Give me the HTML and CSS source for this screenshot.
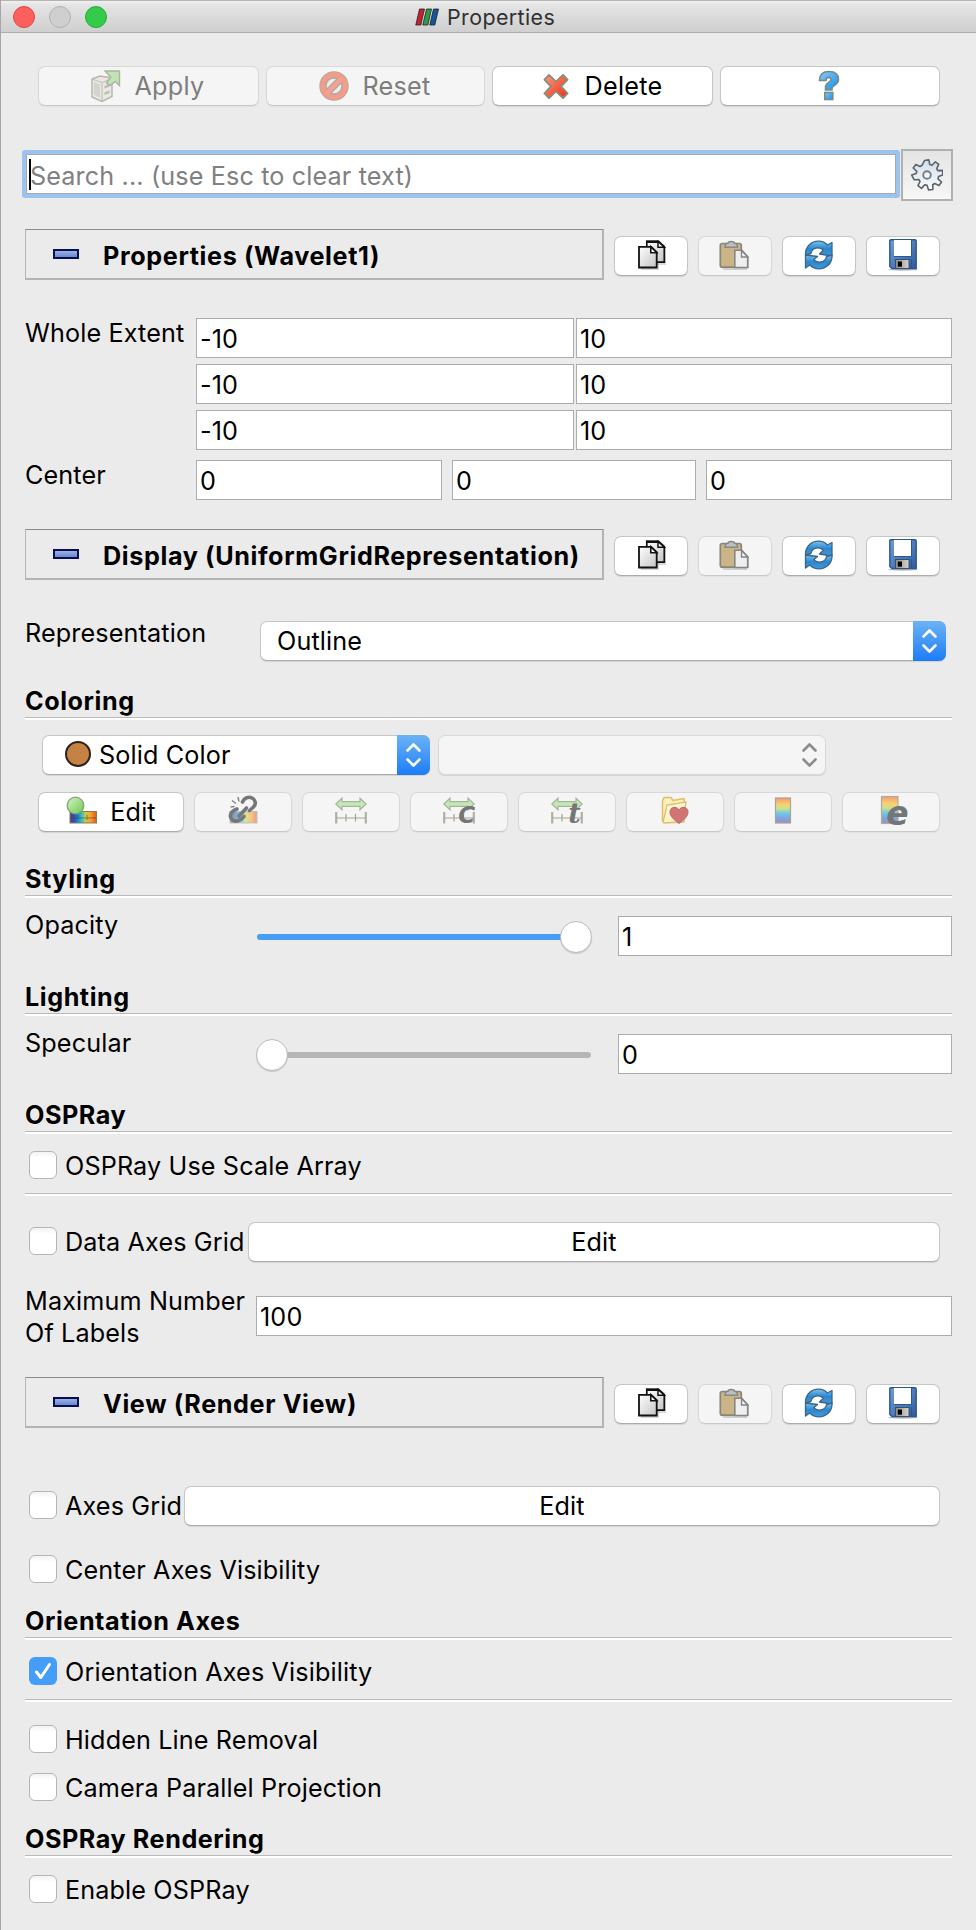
FILE: index.html
```html
<!DOCTYPE html>
<html lang="en">
<head>
<meta charset="utf-8">
<title>Properties</title>
<link rel="stylesheet" href="styles.css">
</head>
<body>
<svg class="defs" width="0" height="0" aria-hidden="true">
  <defs>
    <linearGradient id="gPage" x1="0" y1="0" x2="1" y2="1"><stop offset="0" stop-color="#fff"/><stop offset="1" stop-color="#c4c4c4"/></linearGradient>
    <linearGradient id="gBlue" x1="0" y1="0" x2="0" y2="1"><stop offset="0" stop-color="#7cc4ee"/><stop offset=".5" stop-color="#2b86cf"/><stop offset="1" stop-color="#3f9bdb"/></linearGradient>
    <linearGradient id="gDisk" x1="0" y1="0" x2="1" y2="1"><stop offset="0" stop-color="#6f9fd8"/><stop offset="1" stop-color="#2f5c9e"/></linearGradient>
    <linearGradient id="gMetal" x1="0" y1="0" x2="1" y2="0"><stop offset="0" stop-color="#8d8d85"/><stop offset="1" stop-color="#d8d6cd"/></linearGradient>
    <linearGradient id="gRed" x1="0" y1="0" x2="1" y2="1"><stop offset="0" stop-color="#ff9a86"/><stop offset="1" stop-color="#f42a0c"/></linearGradient>
    <linearGradient id="gHelp" x1="0" y1="0" x2="1" y2="1"><stop offset="0" stop-color="#86cbfa"/><stop offset="1" stop-color="#0f90f5"/></linearGradient>
    <linearGradient id="gGear" x1="0" y1="0" x2="0" y2="1"><stop offset="0" stop-color="#d3dde6"/><stop offset="1" stop-color="#fbfcfd"/></linearGradient>
    <linearGradient id="gGreen" x1="0" y1="0" x2="1" y2="1"><stop offset="0" stop-color="#d5f2c4"/><stop offset="1" stop-color="#6cc94e"/></linearGradient>
    <linearGradient id="gRainH" x1="0" y1="0" x2="1" y2="0"><stop offset="0" stop-color="#6a2a94"/><stop offset=".2" stop-color="#1c62b8"/><stop offset=".4" stop-color="#1fb0d8"/><stop offset=".58" stop-color="#c2cf4a"/><stop offset=".78" stop-color="#fba02c"/><stop offset="1" stop-color="#e2571c"/></linearGradient>
    <linearGradient id="gRainV" x1="0" y1="0" x2="0" y2="1"><stop offset="0" stop-color="#f29a70"/><stop offset=".25" stop-color="#f8cf70"/><stop offset=".42" stop-color="#cfe08a"/><stop offset=".6" stop-color="#6fcbe4"/><stop offset=".8" stop-color="#80a6dc"/><stop offset="1" stop-color="#a18bc8"/></linearGradient>
  </defs>
  <symbol id="i-copy" viewBox="0 0 32 32">
    <path d="M13 5h14.500l1.500 5v16H13z" fill="#999" opacity=".35"/><path d="M4 29h18v2H4zM20 15h2v15h-2z" fill="#999" opacity=".4"/>
    <path d="M9.800 2.300h11.800l5.700 5.400v15.500H9.800z" fill="url(#gPage)" stroke="#111" stroke-width="1.700"/><path d="M9 2.800h12.500" stroke="#111" stroke-width="2.400"/><path d="M21 2.500v5.700h6.300z" fill="#fff" stroke="#111" stroke-width="1.500"/>
    <path d="M2 7.800h12.200l5.500 5.300v15.400H2z" fill="url(#gPage)" stroke="#111" stroke-width="1.800"/><path d="M13.800 7.800v6h6z" fill="#fff" stroke="#111" stroke-width="1.600"/>
  </symbol>
  <symbol id="i-paste" viewBox="0 0 32 32">
    <path d="M3 29h25v2H5zM28 16l2 2v11h-2z" fill="#aaa" opacity=".5"/>
    <rect x="1.300" y="4.500" width="21" height="23.700" rx="2" fill="#cbb486" stroke="#8b8778" stroke-width="1.700"/>
    <path d="M6 8.200c0-3 1.500-3.900 3-3.900C9.500 2 15 2 15.500 4.300c1.500 0 3 .9 3 3.900z" fill="#bdbfbf" stroke="#888" stroke-width="1.500"/>
    <path d="M15.800 11.300h7l5.900 6.400v10.800H15.800z" fill="#eee" stroke="#858585" stroke-width="1.600"/><path d="M22.500 11.500v6.500h6.200z" fill="#f6f6f6" stroke="#858585" stroke-width="1.400"/>
  </symbol>
  <symbol id="i-refresh" viewBox="0 0 32 32">
    <path d="M2.500 16C2 7 9 2.200 15.500 2.200c4 0 7 1.500 8.800 3.800L29 3.500V17l-12.500-2 3.800-3.800C17 7.500 9 8 8 14.500z" fill="url(#gBlue)" stroke="#3d6588" stroke-width="1.300" stroke-linejoin="round"/>
    <path d="M29 16c.5 9-6.500 13.800-13 13.800-4 0-7-1.500-9.300-3.800L2.500 29V16l12 1.500-3.800 3.300C14 24.500 22.500 24 23.500 17.500z" fill="url(#gBlue)" stroke="#3d6588" stroke-width="1.300" stroke-linejoin="round"/>
  </symbol>
  <symbol id="i-save" viewBox="0 0 32 32">
    <ellipse cx="16" cy="30.500" rx="15" ry="1.200" fill="#bbb"/>
    <path d="M4 .8h24q1.200 0 1.200 1.200v27.500H5L2.800 27.500V2Q2.800.8 4 .8z" fill="url(#gDisk)" stroke="#2c5794" stroke-width="1.400"/>
    <rect x="7" y="1" width="17.500" height="16.200" fill="#fff"/><path d="M24.500 1v16.500H7" fill="none" stroke="#2c5794" stroke-width="1"/>
    <rect x="8.500" y="20.500" width="13.500" height="9" fill="url(#gMetal)" stroke="#334e77" stroke-width="1"/><rect x="10.800" y="22.500" width="4.200" height="5.200" fill="#000"/><path d="M24.500 20v9.500" stroke="#2c5794" stroke-width="1.200"/>
  </symbol>
  <symbol id="i-gear" viewBox="0 0 32 32">
    <path d="M13.500 1.500l4.300-.6 1 4.600 2.200.8 3.400-3.500 3.300 2.600-2 4.200 1.100 2 4.700-.2.500 4.400-4.400 1.600-.6 2.400 3.500 3.200-2.500 3.500-4.300-2-2 1.200.2 4.800-4.300.4-1.500-4.500-2.400-.6-3.200 3.600-3.500-2.700 2-4.200-1.200-2-4.700.2L.6 16l4.600-1.400.6-2.300L2.200 9l2.600-3.500L9 7.500l2-1.200z" fill="url(#gGear)" stroke="#59646f" stroke-width="1.600" stroke-linejoin="round"/>
    <circle cx="16" cy="16" r="3.800" fill="#f0f2f4" stroke="#717b86" stroke-width="1.900"/>
  </symbol>
  <symbol id="i-apply" viewBox="0 0 32 32">
    <path d="M2 9l8-3 12 2v18.500L12 31.500 2 27z" fill="#e9e8e5" stroke="#b9b7ae" stroke-width="1.500"/><path d="M2 9l10 3.500L22 8.500M12 12.500V31" fill="none" stroke="#c4c2ba" stroke-width="1.200"/><path d="M4 12l6 2.500v13L4 25z" fill="#d4d3cf"/><path d="M14.500 16l5-2v2.500l-5 2zM14.500 22.500l5-2V23l-5 2z" fill="#bbb9b0"/>
    <path d="M15 1h14.500v14.500l-4.200-4-4.800 3.800-4-2.300 4.200-6z" fill="#bfe3b4" stroke="#aab49f" stroke-width="1.400"/>
  </symbol>
  <symbol id="i-reset" viewBox="0 0 32 32">
    <circle cx="16" cy="16" r="11" fill="#ececea" stroke="#b3aa9e" stroke-width="7.400"/>
    <path d="M8 24L24 8" stroke="#b3aa9e" stroke-width="7"/><circle cx="16" cy="16" r="11.300" fill="none" stroke="#f49b8a" stroke-width="4.800"/>
    <path d="M8 24L24 8" stroke="#f5a090" stroke-width="4.300"/>
  </symbol>
  <symbol id="i-delete" viewBox="0 0 32 32">
    <path d="M9 5l7 6.600L23 5l4.600 4.600L21 16.500l6.600 6.900L23 28l-7-6.600L9 28l-4.600-4.600 6.600-6.900-6.600-6.900z" fill="url(#gRed)" stroke="#8f8c7a" stroke-width="1.900" stroke-linejoin="round"/>
  </symbol>
  <symbol id="i-help" viewBox="0 0 32 32">
    <path d="M6.500 10.500C6.500 4.500 10 1.500 16 1.500s9.500 3 9.500 8c0 6-6.500 5.500-6.500 9v1.500h-6.500V17c0-4.500 5.500-4.500 5.500-7.500 0-3-5-3-5 1z" fill="url(#gHelp)" stroke="#7d8a7c" stroke-width="1.600"/><rect x="11.800" y="22.500" width="8" height="7" fill="url(#gHelp)" stroke="#7d8a7c" stroke-width="1.600"/>
  </symbol>
  <symbol id="i-editmap" viewBox="0 0 32 32">
    <rect x="4" y="16.500" width="26.500" height="11.500" fill="url(#gRainH)" stroke="#8b7b56" stroke-width="1"/><path d="M4 23h26M12 20v4M21 20v5" stroke="#454545" stroke-width="1" opacity=".6"/>
    <circle cx="9.500" cy="10.500" r="8.300" fill="url(#gGreen)" stroke="#80a56f" stroke-width="1.300"/>
  </symbol>
  <symbol id="i-unlink" viewBox="0 0 32 32">
    <rect x="3" y="16.500" width="27" height="11.500" fill="url(#gRainH)" stroke="#999" stroke-width="1" opacity=".55"/>
    <g fill="none" stroke="#777" stroke-width="3.600" stroke-linecap="round"><path d="M15.500 7c1.500-4 6-6 9.500-4 4 2.200 4.300 6 1.500 9l-4 3.500"/><path d="M10 14C4 16 2 20.500 4.500 24s8.500 2.500 12.500-2.500"/><path d="M12 21l7.500-8"/></g>
    <path d="M5 5.500l4 3M11 2l1 4.500M3.500 12l4-.5" stroke="#888" stroke-width="1.500"/>
  </symbol>
  <symbol id="i-range" viewBox="0 0 32 32">
    <path d="M.8 9L7 3.200v3.500h18V3.200L31.200 9 25 14.800v-3.500H7v3.500z" fill="#c4e7b6" stroke="#a5b69b" stroke-width="1.200"/>
    <path d="M1.200 17v11.500M30.800 17v11.500" stroke="#b2b0a3" stroke-width="2.200"/><path d="M1 23h30M11 19v7.500M20.500 19v7.500" stroke="#a5a396" stroke-width="1.200"/>
  </symbol>
  <symbol id="i-folder" viewBox="0 0 32 32">
    <path d="M3.500 26V6l1.500-3.500h7L14 5.500l11-2 1 8L25 27l-20 1z" fill="#fbeebb" stroke="#dfbf67" stroke-width="1.500" stroke-linejoin="round"/><path d="M4 27.500L8 10l19-3-2 13" fill="#fdf4cf" stroke="#dfbf67" stroke-width="1.300"/>
    <path d="M20 28.500C14 24 11 21 11 17c0-5 6.500-6.500 9-2 2.500-4.500 9-3 9 2 0 4-3 7-9 11.500z" fill="#d07474" stroke="#bd6a6a" stroke-width="1"/>
  </symbol>
  <symbol id="i-map" viewBox="0 0 32 32"><rect x="8.500" y="3" width="15" height="25" fill="url(#gRainV)" stroke="#a9a498" stroke-width="1.200"/></symbol>
  <symbol id="i-mape" viewBox="0 0 32 32"><rect x="6.500" y="1.500" width="16.500" height="27" fill="url(#gRainV)" stroke="#b0aca3" stroke-width="1.200"/></symbol>
  <symbol id="i-chev" viewBox="0 0 33 40"><path d="M10.500 15.500L16.500 9.500l6 6M10.500 24.500l6 6 6-6" fill="none" stroke="currentColor" stroke-width="2.600" stroke-linecap="round" stroke-linejoin="round"/></symbol>
</svg>

<div class="window">
  <header class="titlebar">
    <div class="lights"><i class="light red"></i><i class="light grey"></i><i class="light green"></i></div>
    <div class="title">
      <svg class="logo" width="24" height="18" viewBox="0 0 24 18"><path d="M4.500 1h5L5.800 17H.8z" fill="#c8202f" stroke="#222" stroke-width=".8"/><path d="M11.500 1h5l-3.700 16h-5z" fill="#2d9a48" stroke="#222" stroke-width=".8"/><path d="M18.500 1h5l-3.700 16h-5z" fill="#1057a0" stroke="#222" stroke-width=".8"/></svg>
      <span>Properties</span>
    </div>
  </header>

  <main class="panel">
    <div class="actions">
      <button class="btn off"><svg class="ico"><use href="#i-apply"/></svg><span>Apply</span></button>
      <button class="btn off"><svg class="ico"><use href="#i-reset"/></svg><span>Reset</span></button>
      <button class="btn"><svg class="ico"><use href="#i-delete"/></svg><span>Delete</span></button>
      <button class="btn"><svg class="ico"><use href="#i-help"/></svg></button>
    </div>

    <div class="search">
      <div class="search-box"><span class="caret"></span><span class="hint">Search ... (use Esc to clear text)</span></div>
      <button class="gear"><svg class="ico"><use href="#i-gear"/></svg></button>
    </div>

    <div class="section first">
      <div class="bar"><i class="minus"></i><span>Properties (Wavelet1)</span></div>
      <button class="btn pages"><svg class="ico"><use href="#i-copy"/></svg></button>
      <button class="btn off"><svg class="ico"><use href="#i-paste"/></svg></button>
      <button class="btn"><svg class="ico"><use href="#i-refresh"/></svg></button>
      <button class="btn"><svg class="ico"><use href="#i-save"/></svg></button>
    </div>
    <div class="extent">
      <span class="label">Whole Extent</span>
      <div class="pairs">
        <div class="field">-10</div><div class="field">10</div>
        <div class="field">-10</div><div class="field">10</div>
        <div class="field">-10</div><div class="field">10</div>
      </div>
    </div>
    <div class="center">
      <span class="label">Center</span>
      <div class="triple"><div class="field">0</div><div class="field">0</div><div class="field">0</div></div>
    </div>

    <div class="section second">
      <div class="bar"><i class="minus"></i><span>Display (UniformGridRepresentation)</span></div>
      <button class="btn pages"><svg class="ico"><use href="#i-copy"/></svg></button>
      <button class="btn off"><svg class="ico"><use href="#i-paste"/></svg></button>
      <button class="btn"><svg class="ico"><use href="#i-refresh"/></svg></button>
      <button class="btn"><svg class="ico"><use href="#i-save"/></svg></button>
    </div>
    <div class="repr">
      <span class="label">Representation</span>
      <div class="combo"><span>Outline</span><svg class="arrows"><use href="#i-chev"/></svg></div>
    </div>

    <h2 class="group g-coloring">Coloring</h2>
    <div class="colorby">
      <div class="combo solid"><i class="swatch"></i><span>Solid Color</span><svg class="arrows"><use href="#i-chev"/></svg></div>
      <div class="combo off"><svg class="arrows"><use href="#i-chev"/></svg></div>
    </div>
    <div class="tools">
      <button class="btn edit"><svg class="ico"><use href="#i-editmap"/></svg><span>Edit</span></button>
      <button class="btn off"><svg class="ico"><use href="#i-unlink"/></svg></button>
      <button class="btn off"><svg class="ico"><use href="#i-range"/></svg></button>
      <button class="btn off"><svg class="ico"><use href="#i-range"/></svg><b class="mark c">C</b></button>
      <button class="btn off"><svg class="ico"><use href="#i-range"/></svg><b class="mark t">t</b></button>
      <button class="btn off"><svg class="ico"><use href="#i-folder"/></svg></button>
      <button class="btn off"><svg class="ico"><use href="#i-map"/></svg></button>
      <button class="btn off"><svg class="ico"><use href="#i-mape"/></svg><b class="mark e">e</b></button>
    </div>

    <h2 class="group g-styling">Styling</h2>
    <div class="slide">
      <span class="label">Opacity</span>
      <div class="slider full"><i class="knob"></i></div>
      <div class="field">1</div>
    </div>
    <h2 class="group g-lighting">Lighting</h2>
    <div class="slide">
      <span class="label">Specular</span>
      <div class="slider"><i class="knob"></i></div>
      <div class="field">0</div>
    </div>
    <h2 class="group g-ospray">OSPRay</h2>
    <div class="check under"><i class="box"></i><span>OSPRay Use Scale Array</span></div>
    <hr class="rule">
    <div class="check grid-row data"><i class="box"></i><span>Data Axes Grid</span><button class="btn">Edit</button></div>
    <div class="labels"><span class="label">Maximum Number<br>Of Labels</span><div class="field">100</div></div>

    <div class="section third">
      <div class="bar"><i class="minus"></i><span>View (Render View)</span></div>
      <button class="btn pages"><svg class="ico"><use href="#i-copy"/></svg></button>
      <button class="btn off"><svg class="ico"><use href="#i-paste"/></svg></button>
      <button class="btn"><svg class="ico"><use href="#i-refresh"/></svg></button>
      <button class="btn"><svg class="ico"><use href="#i-save"/></svg></button>
    </div>
    <div class="check grid-row axes"><i class="box"></i><span>Axes Grid</span><button class="btn">Edit</button></div>
    <div class="check cav"><i class="box"></i><span>Center Axes Visibility</span></div>
    <h2 class="group g-orient">Orientation Axes</h2>
    <div class="check under"><i class="box on"><svg width="28" height="28" viewBox="0 0 28 28"><path d="M7.500 15l4.300 5.500L20.500 7.500" fill="none" stroke="#fff" stroke-width="3" stroke-linecap="round" stroke-linejoin="round"/></svg></i><span>Orientation Axes Visibility</span></div>
    <hr class="rule">
    <div class="check hidden-line"><i class="box"></i><span>Hidden Line Removal</span></div>
    <div class="check camera"><i class="box"></i><span>Camera Parallel Projection</span></div>
    <h2 class="group g-render">OSPRay Rendering</h2>
    <div class="check under"><i class="box"></i><span>Enable OSPRay</span></div>
  </main>
</div>
</body>
</html>
```

FILE: styles.css
```css
* { box-sizing: border-box; }
body {
  margin: 0;
  background: #ebebeb;
  color: #000;
  font-family: Inter, "Liberation Sans", sans-serif;
  font-size: 25.2px;
  line-height: 32px;
  letter-spacing: 0.13px;
}
.defs { position: absolute; }
.window {
  width: 976px;
  height: 1930px;
  overflow: hidden;
  border-left: 1px solid #a6a6a6;
  background: #ebebeb;
}

/* Title bar */
.titlebar {
  display: flex;
  align-items: center;
  height: 33px;
  margin-left: -1px;
  padding-left: 13px;
  border-top: 1px solid #b4b4b4;
  border-bottom: 1px solid #adadad;
  background: linear-gradient(#f2f2f2, #e4e4e4 4px, #cfcfcf);
}
.lights { display: flex; gap: 14px; }
.light { width: 22px; height: 22px; border-radius: 50%; border: 1px solid; }
.red { background: #fc605c; border-color: #e2443f; }
.grey { background: #cfcfcf; border-color: #b0b0b0; }
.green { background: #34cb4a; border-color: #24ac35; }
.title {
  display: flex;
  align-items: center;
  gap: 8px;
  margin-left: 308px;
  color: #303030;
  font-size: 21.4px;
  letter-spacing: 0.4px;
}

.panel { padding: 33px 24px 0; }

/* Buttons */
.btn {
  display: flex;
  align-items: center;
  justify-content: center;
  height: 39px;
  padding: 0;
  border: 1px solid #c6c6c6;
  border-bottom-color: #acacac;
  border-radius: 7px;
  background: #fff;
  box-shadow: 0 1px 1px rgba(0, 0, 0, .1);
  color: #000;
  font: inherit;
  letter-spacing: inherit;
}
.btn.off { background: #f5f5f5; border-color: #d8d8d8; border-bottom-color: #c8c8c8; color: #7d7d7d; box-shadow: 0 1px 1px rgba(0, 0, 0, .04); }
.ico { display: block; width: 32px; height: 32px; flex: none; }

.actions {
  display: grid;
  grid-template-columns: 221px 219px 221px 220px;
  gap: 7px;
  padding-left: 13px;
}
.actions .btn { gap: 12px; padding: 0 2px 1px 0; height: 40px; letter-spacing: 0.3px; }

/* Search */
.search { display: flex; gap: 1px; margin: 43px -1px 0 -3px; }
.search-box {
  display: flex;
  align-items: center;
  width: 878px;
  height: 48px;
  margin-top: 1px;
  border: 4px solid #9ac3ee;
  border-radius: 3px;
  background: #fff;
  box-shadow: inset 0 0 0 1px #a9a9a9;
  color: #808080;
  padding-left: 3px;
}
.hint { padding-top: 3px; }
.caret { width: 2px; height: 31px; margin-right: -1px; background: #000; }
.gear {
  display: flex;
  align-items: center;
  justify-content: center;
  width: 52px;
  height: 52px;
  padding: 0;
  border: 2px solid #b0b0b0;
  background: linear-gradient(#e4e4e4, #f7f7f7);
}

/* Collapsible section headers */
.section { display: flex; gap: 10px; align-items: flex-start; height: 51px; }
.section .btn { width: 74px; height: 40px; margin-top: 7px; padding-bottom: 2px; }
.section .pages { padding-left: 3px; }
.first { margin-top: 28px; }
.second { margin-top: 29px; }
.third { margin-top: 33px; }
.bar {
  display: flex;
  align-items: center;
  width: 579px;
  height: 51px;
  padding: 3px 0 0 27px;
  border: solid #b4b4b4;
  border-width: 1px 2px 2px 1px;
  border-top-color: #8c8c8c;
  font-weight: 700;
  letter-spacing: 0.62px;
  white-space: nowrap;
}
.minus { width: 26px; height: 10px; margin: -4px 24px 0 0; border: 2px solid #06104f; background: linear-gradient(#9bb2e6, #6a88d0); }

/* Text fields */
.field { height: 40px; padding: 1px 0 0 3px; border: 1px solid #acacac; background: #fff; line-height: 38px; }
.label { display: block; }
.extent { display: flex; margin-top: 38px; }
.extent .label, .center .label { width: 171px; margin-top: -1px; }
.pairs { display: grid; grid-template-columns: 378px 376px; gap: 6px 2px; }
.center { display: flex; margin-top: 10px; }
.triple { display: grid; grid-template-columns: 246px 244px 246px; gap: 10px; }

/* Combo boxes */
.combo {
  display: flex;
  align-items: center;
  height: 40px;
  border: 1px solid #c6c6c6;
  border-bottom-color: #acacac;
  border-radius: 7px;
  background: #fff;
  padding: 0 0 1px 16px;
  box-shadow: 0 1px 1px rgba(0, 0, 0, .1);
}
.arrows {
  width: 33px;
  height: 40px;
  margin: 0 -1px -1px auto;
  border-radius: 0 7px 7px 0;
  background: linear-gradient(#6cb3f5, #1c7cf8);
  color: #fff;
}
.combo.off { background: #f5f5f5; border-color: #d8d8d8; }
.combo.off .arrows { background: none; color: #8c8c8c; }
.repr { display: flex; margin-top: 37px; }
.repr .label { width: 235px; }
.repr .combo { width: 686px; margin-top: 4px; }
.colorby { display: flex; gap: 8px; margin: 15px 0 0 17px; }
.colorby .combo { width: 388px; }
.colorby .solid { padding-left: 22px; }
.swatch { width: 26px; height: 26px; margin: -2px 8px 0 0; border: 2px solid #2a221c; border-radius: 50%; background: #c68145; }

.tools { display: grid; grid-template-columns: 145.3px repeat(7, 97.3px); gap: 10.7px; margin: 17px 0 0 13.4px; }
.tools .btn { position: relative; height: 40px; padding-bottom: 2px; }
.tools .edit { gap: 12px; padding-bottom: 0; }
.tools .edit .ico { margin-top: -2px; }
.mark { position: absolute; color: #757575; font-family: "DejaVu Sans", sans-serif; font-style: italic; font-size: 27px; line-height: 27px; letter-spacing: 0; }
.mark.c { left: 47px; top: 9px; font-size: 23px; }
.mark.t { left: 49px; top: 7px; font-family: "DejaVu Serif", serif; font-size: 27px; }
.mark.e { left: 43px; top: 7px; font-size: 33px; }

/* Group titles */
.group {
  height: 35px;
  margin: 0;
  border-bottom: 2px solid #fff;
  box-shadow: inset 0 -1px #b9b9b9;
  font-size: inherit;
  font-weight: 700;
  letter-spacing: 0.55px;
}
.g-coloring { margin-top: 24px; }
.g-styling { margin-top: 31px; }
.g-lighting, .g-ospray { margin-top: 33px; }
.g-orient { margin-top: 22px; }
.g-render { margin-top: 22px; }
.rule { height: 3px; margin: 14px 0 0; border: 0; border-top: 1px solid #b9b9b9; background: #fff; }

/* Sliders */
.slide { display: flex; height: 50px; padding-top: 11px; }
.slide .label { width: 232px; }
.slide .field { width: 334px; margin: 7px 0 0 27px; }
.slider { display: flex; align-items: center; width: 334px; height: 6px; margin-top: 25px; border-radius: 3px; background: #b6b6b6; }
.slider.full { background: #469df8; justify-content: flex-end; }
.knob { width: 32px; height: 32px; flex: none; margin: 0 -1px; border: 1px solid #bbb; border-radius: 50%; background: #fff; box-shadow: 0 1px 1px rgba(0, 0, 0, .15); }

/* Check rows */
.check { display: flex; align-items: center; height: 28px; padding-left: 4px; }
.check > span { margin-left: 8px; padding-top: 2px; white-space: nowrap; }
.box { width: 28px; height: 28px; flex: none; border: 1px solid #b5b5b5; border-radius: 6px; background: linear-gradient(#f3f3f3, #fff 6px); }
.box.on { border: 0; background: #469df8; }
.under { margin-top: 17px; }
.grid-row .btn { height: 40px; margin: 1px 12px 0 auto; }
.data { margin-top: 31px; }
.data .btn { width: 692px; }
.axes { margin-top: 63px; }
.axes .btn { width: 756px; }
.cav { margin-top: 36px; }
.hidden-line { margin-top: 23px; }
.camera { margin-top: 20px; }
.labels { display: flex; margin-top: 30px; height: 59px; }
.labels .label { width: 231px; white-space: nowrap; }
.labels .field { width: 696px; margin-top: 11px; }
```
